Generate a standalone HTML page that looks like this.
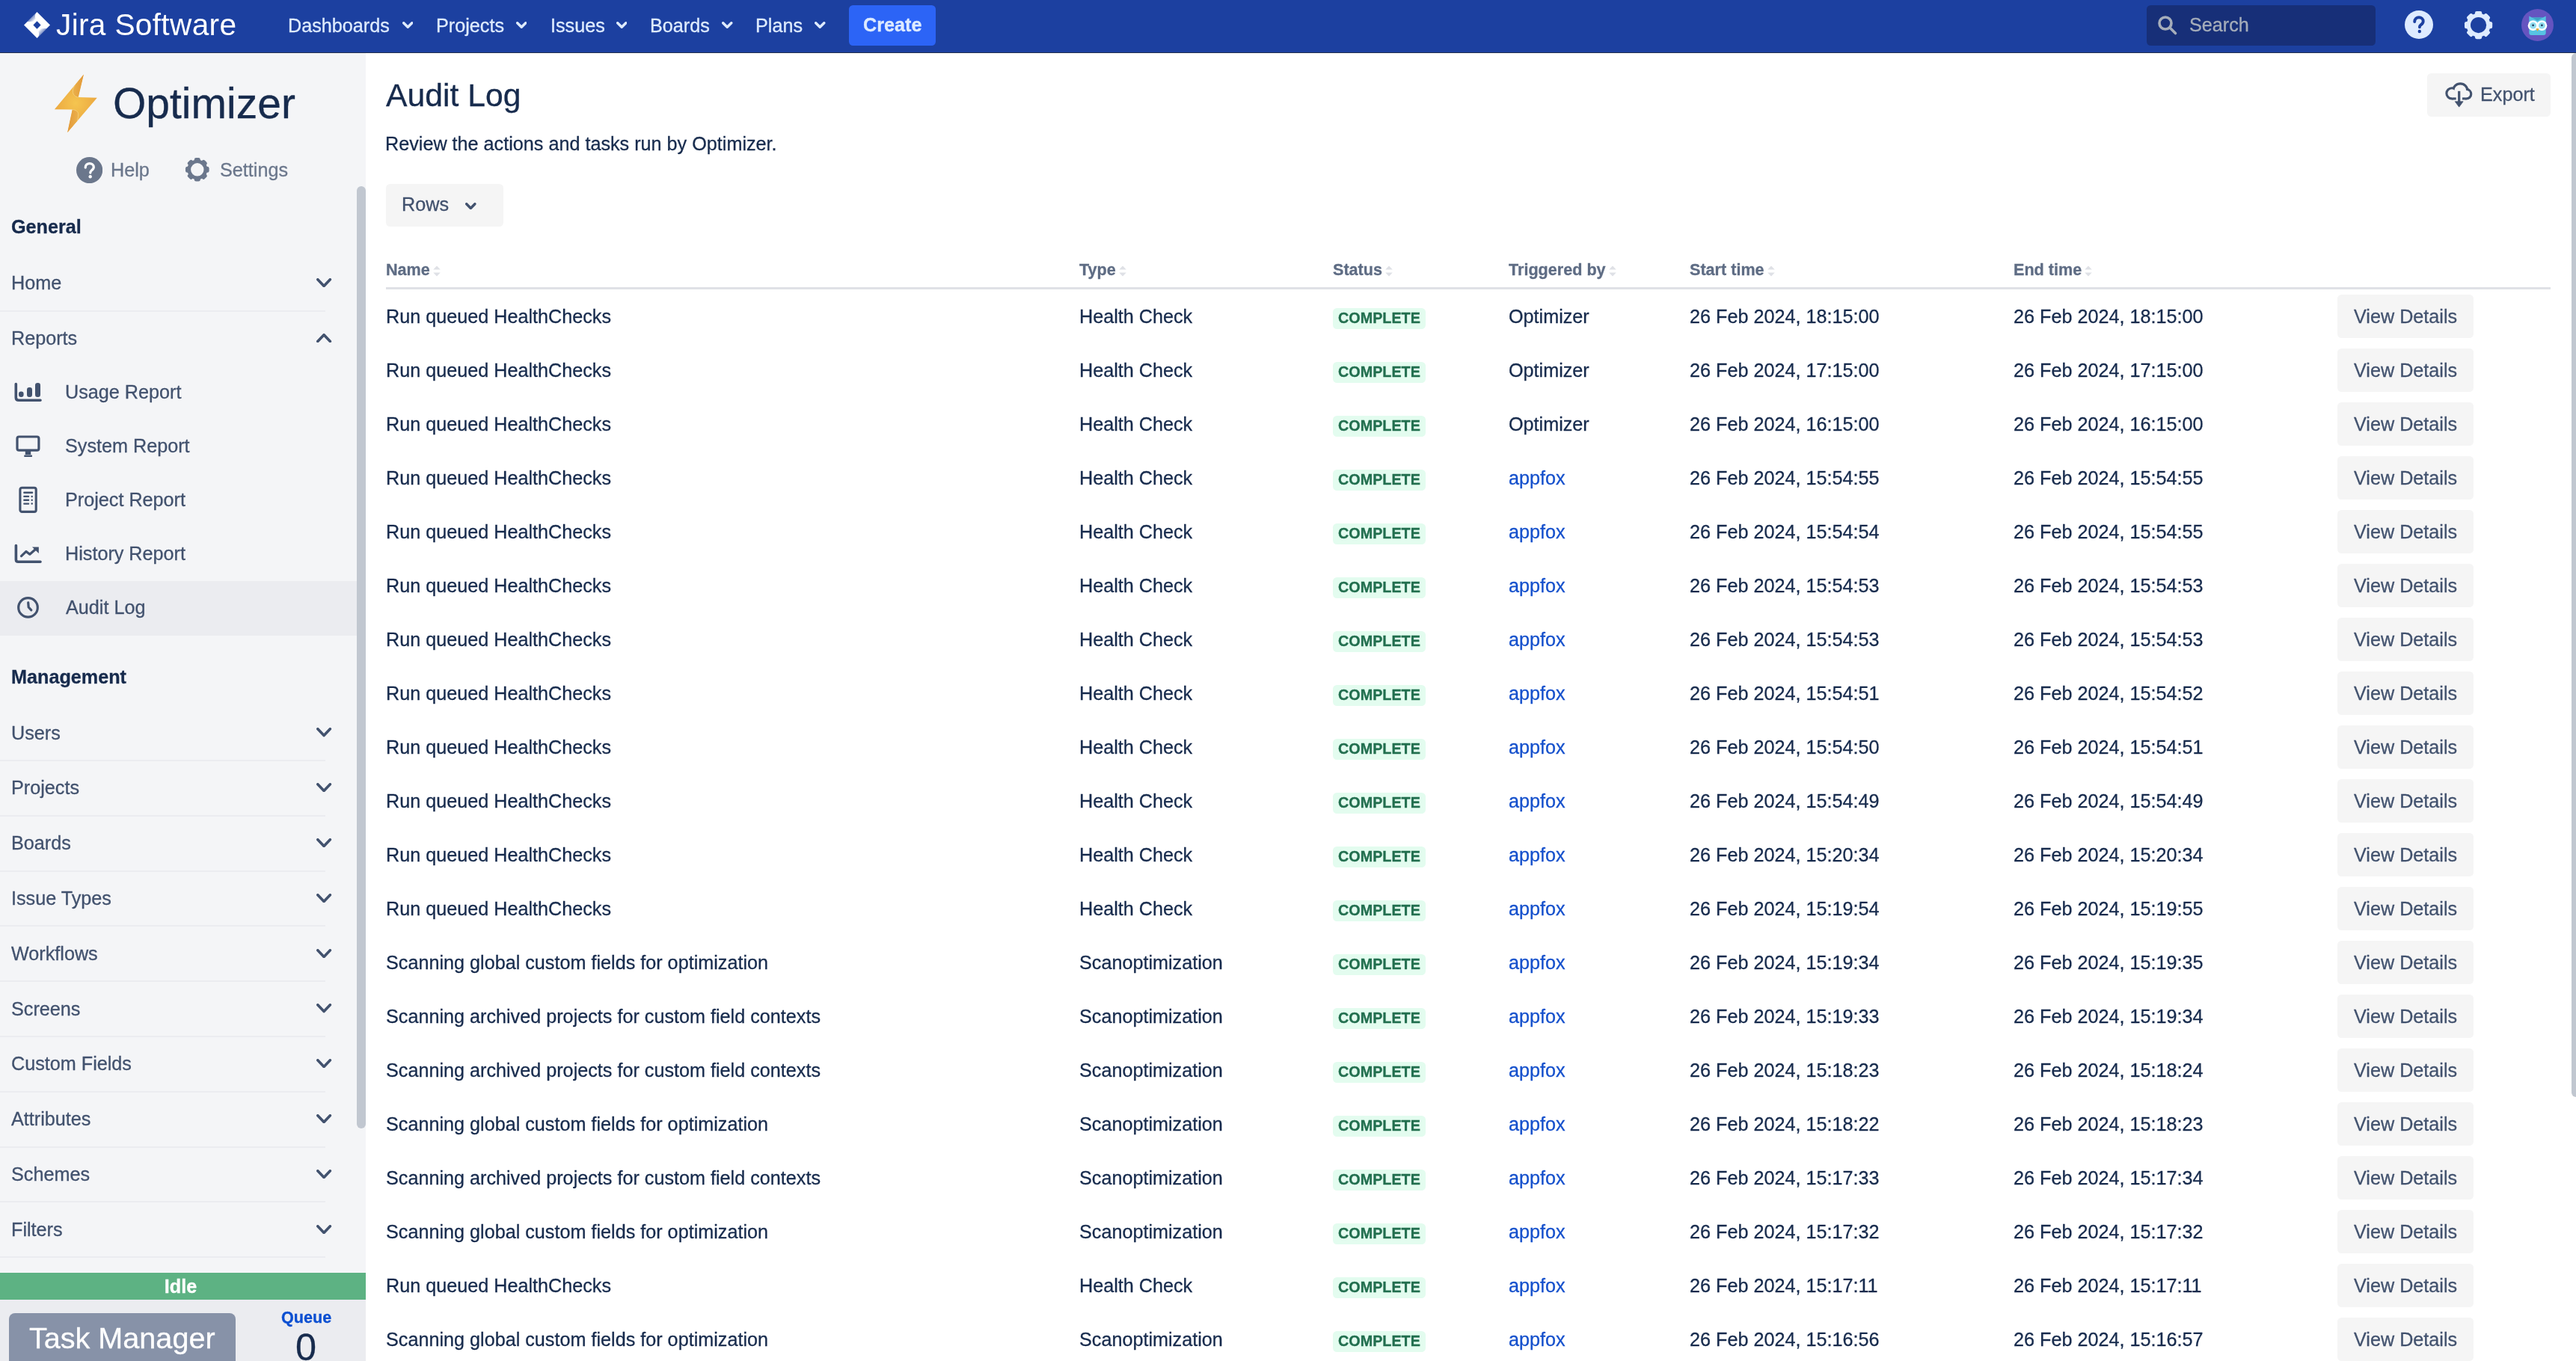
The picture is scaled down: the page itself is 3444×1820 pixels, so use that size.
<!DOCTYPE html>
<html><head><meta charset="utf-8"><title>Audit Log - Optimizer</title>
<style>
html,body{margin:0;padding:0;}
body{width:3444px;height:1820px;overflow:hidden;position:relative;background:#fff;font-family:"Liberation Sans",sans-serif;}
.a{position:absolute;}
.t{position:absolute;white-space:nowrap;line-height:1;will-change:transform;-webkit-text-stroke:0.3px currentColor;}
</style></head><body>
<div class="a" style="left:0.00px;top:0.00px;width:3444.00px;height:70.00px;background:#1c40a0;border-radius:0px;"></div>
<div class="a" style="left:0.00px;top:70.00px;width:3444.00px;height:1.00px;background:#24314d;border-radius:0px;"></div>
<svg class="a" style="left:31px;top:15px" width="37" height="37" viewBox="0 0 37 37">
<defs>
<linearGradient id="jg1" gradientUnits="userSpaceOnUse" x1="8.5" y1="8.5" x2="14" y2="14"><stop offset="0" stop-color="#1c40a0" stop-opacity="0.75"/><stop offset="1" stop-color="#1c40a0" stop-opacity="0"/></linearGradient>
<linearGradient id="jg2" gradientUnits="userSpaceOnUse" x1="28.5" y1="28.5" x2="23" y2="23"><stop offset="0" stop-color="#1c40a0" stop-opacity="0.75"/><stop offset="1" stop-color="#1c40a0" stop-opacity="0"/></linearGradient>
</defs>
<path d="M18.5 1 L36 18.5 L18.5 36 L1 18.5 Z" fill="#fff"/>
<path d="M5.5 14 L17.2 2.3 Q14.5 6.5 16.8 10.2 L13.3 13.7 Z" fill="url(#jg1)"/>
<path d="M31.5 23 L19.8 34.7 Q22.5 30.5 20.2 26.8 L23.7 23.3 Z" fill="url(#jg2)"/>
<path d="M18.5 13.3 L23.6 18.5 L18.5 23.7 L13.4 18.5 Z" fill="#1c40a0"/>
</svg>
<div class="t" style="left:75.00px;top:12.63px;font-size:40.6px;color:#ffffff;letter-spacing:0.35px;-webkit-text-stroke:0;">Jira Software</div>
<div class="t" style="left:385.20px;top:21.77px;font-size:25.2px;color:#deebff;">Dashboards</div>
<svg class="a" style="left:537.75px;top:28.90px" width="14.5" height="9" viewBox="0 0 14.5 9"><polyline points="1.70,1.70 7.25,7.30 12.80,1.70" fill="none" stroke="#deebff" stroke-width="3.4" stroke-linecap="round" stroke-linejoin="round"/></svg>
<div class="t" style="left:582.60px;top:21.77px;font-size:25.2px;color:#deebff;">Projects</div>
<svg class="a" style="left:689.75px;top:28.90px" width="14.5" height="9" viewBox="0 0 14.5 9"><polyline points="1.70,1.70 7.25,7.30 12.80,1.70" fill="none" stroke="#deebff" stroke-width="3.4" stroke-linecap="round" stroke-linejoin="round"/></svg>
<div class="t" style="left:735.50px;top:21.77px;font-size:25.2px;color:#deebff;">Issues</div>
<svg class="a" style="left:823.75px;top:28.90px" width="14.5" height="9" viewBox="0 0 14.5 9"><polyline points="1.70,1.70 7.25,7.30 12.80,1.70" fill="none" stroke="#deebff" stroke-width="3.4" stroke-linecap="round" stroke-linejoin="round"/></svg>
<div class="t" style="left:868.60px;top:21.77px;font-size:25.2px;color:#deebff;">Boards</div>
<svg class="a" style="left:965.45px;top:28.90px" width="14.5" height="9" viewBox="0 0 14.5 9"><polyline points="1.70,1.70 7.25,7.30 12.80,1.70" fill="none" stroke="#deebff" stroke-width="3.4" stroke-linecap="round" stroke-linejoin="round"/></svg>
<div class="t" style="left:1009.60px;top:21.77px;font-size:25.2px;color:#deebff;">Plans</div>
<svg class="a" style="left:1089.45px;top:28.90px" width="14.5" height="9" viewBox="0 0 14.5 9"><polyline points="1.70,1.70 7.25,7.30 12.80,1.70" fill="none" stroke="#deebff" stroke-width="3.4" stroke-linecap="round" stroke-linejoin="round"/></svg>
<div class="a" style="left:1135.20px;top:7.00px;width:115.70px;height:53.90px;background:#2c64f6;border-radius:5.4px;"></div>
<div class="t" style="left:1153.60px;top:21.07px;font-size:25.2px;color:#deebff;font-weight:700;">Create</div>
<div class="a" style="left:2870.00px;top:7.00px;width:305.75px;height:53.75px;background:#172f78;border-radius:5.4px;"></div>
<svg class="a" style="left:2884px;top:20px" width="28" height="28" viewBox="0 0 28 28"><circle cx="11" cy="11" r="8" fill="none" stroke="#a5adba" stroke-width="3.6"/><line x1="17" y1="17" x2="24.5" y2="24.5" stroke="#a5adba" stroke-width="3.6" stroke-linecap="round"/></svg>
<div class="t" style="left:2926.80px;top:21.17px;font-size:25.2px;color:#a5adba;">Search</div>
<svg class="a" style="left:3215px;top:14px" width="38" height="38" viewBox="0 0 38 38"><circle cx="19" cy="19" r="19" fill="#deebff"/>
<path d="M13.2 15 C13.2 11.2 16 9.2 19 9.2 C22.2 9.2 24.7 11.3 24.7 14.4 C24.7 17.2 22.8 18.3 21.4 19.3 C20.3 20.1 19.9 20.7 19.9 22.3" fill="none" stroke="#1c40a0" stroke-width="3.9" stroke-linecap="round"/>
<circle cx="19.8" cy="28" r="2.2" fill="#1c40a0"/></svg>
<svg class="a" style="left:3293.70px;top:13.70px" width="39.20" height="39.20" viewBox="0 0 39.20 39.20"><circle cx="19.60" cy="19.60" r="15.9" fill="#deebff"/><rect x="14.90" y="1.00" width="9.4" height="18.60" rx="2.4" fill="#deebff" transform="rotate(0 19.60 19.60)"/><rect x="14.90" y="1.00" width="9.4" height="18.60" rx="2.4" fill="#deebff" transform="rotate(45 19.60 19.60)"/><rect x="14.90" y="1.00" width="9.4" height="18.60" rx="2.4" fill="#deebff" transform="rotate(90 19.60 19.60)"/><rect x="14.90" y="1.00" width="9.4" height="18.60" rx="2.4" fill="#deebff" transform="rotate(135 19.60 19.60)"/><rect x="14.90" y="1.00" width="9.4" height="18.60" rx="2.4" fill="#deebff" transform="rotate(180 19.60 19.60)"/><rect x="14.90" y="1.00" width="9.4" height="18.60" rx="2.4" fill="#deebff" transform="rotate(225 19.60 19.60)"/><rect x="14.90" y="1.00" width="9.4" height="18.60" rx="2.4" fill="#deebff" transform="rotate(270 19.60 19.60)"/><rect x="14.90" y="1.00" width="9.4" height="18.60" rx="2.4" fill="#deebff" transform="rotate(315 19.60 19.60)"/><circle cx="19.60" cy="19.60" r="10.6" fill="#1c40a0"/></svg>
<svg class="a" style="left:3371px;top:12.4px" width="43" height="43" viewBox="0 0 43 43"><circle cx="21.5" cy="21.5" r="21.5" fill="#6554c0"/>
<path d="M10.3 9.5 L14.2 11.6 L28.8 11.6 L32.7 9.5 L32.7 32 Q32.7 35 29.7 35 L13.3 35 Q10.3 35 10.3 32 Z" fill="#57c3e3"/>
<path d="M14.2 11.6 L28.8 11.6 L21.5 15.8 Z" fill="#3ea3c4"/>
<circle cx="15.6" cy="22.2" r="6.9" fill="#fff"/><circle cx="27.4" cy="22.2" r="6.9" fill="#fff"/>
<circle cx="15.6" cy="22.2" r="4.4" fill="#8fdcef"/><circle cx="27.4" cy="22.2" r="4.4" fill="#8fdcef"/>
<circle cx="15.6" cy="21.8" r="1.4" fill="#253858"/><circle cx="27.4" cy="21.8" r="1.4" fill="#253858"/>
<path d="M19.4 26.3 L23.6 26.3 L21.5 30 Z" fill="#f6a623"/></svg>
<div class="a" style="left:0.00px;top:71.00px;width:489.00px;height:1749.00px;background:#f4f5f7;border-radius:0px;"></div>
<div class="a" style="left:477.00px;top:249.00px;width:12.00px;height:1260.00px;background:#c1c7d0;border-radius:6px;"></div>
<svg class="a" style="left:70px;top:97px" width="64" height="84" viewBox="0 0 64 84">
<defs><radialGradient id="lg" gradientUnits="userSpaceOnUse" cx="31" cy="41" r="30"><stop offset="0" stop-color="#f5c550"/><stop offset="1" stop-color="#eba740"/></radialGradient>
<linearGradient id="lg2" gradientUnits="userSpaceOnUse" x1="28" y1="20" x2="40" y2="20"><stop offset="0" stop-color="#eab04a"/><stop offset="1" stop-color="#e39b3b"/></linearGradient>
<linearGradient id="lg3" gradientUnits="userSpaceOnUse" x1="22" y1="62" x2="34" y2="62"><stop offset="0" stop-color="#e39b3b"/><stop offset="1" stop-color="#ebb04b"/></linearGradient></defs>
<path d="M41.96 2.6 L34.7 33.05 L59.8 33.7 L20.1 80.3 L26.7 49.6 L2.9 49.3 Z" fill="url(#lg)"/>
<clipPath id="lc"><path d="M41.96 2.6 L34.7 33.05 L59.8 33.7 L20.1 80.3 L26.7 49.6 L2.9 49.3 Z"/></clipPath>
<g clip-path="url(#lc)">
<path d="M41.96 2.6 L34.7 33.05 C30 32.5 27.2 29 27.3 25 C27.4 21 29 18.5 30.8 15.9 Z" fill="url(#lg2)"/>
<path d="M20.1 80.3 L26.7 49.6 C31 49.8 34.8 52 34.8 56 C34.8 59.5 33.8 62 33.5 64.4 Z" fill="url(#lg3)"/>
<path d="M34.7 33.05 C30 32.5 27.2 29 27.3 25 C27.4 21 29 18.5 30.8 15.9" fill="none" stroke="#f8d98a" stroke-width="0.7"/>
<path d="M26.7 49.6 C31 49.8 34.8 52 34.8 56 C34.8 59.5 33.8 62 33.5 64.4" fill="none" stroke="#f8d98a" stroke-width="0.7"/>
</g>
</svg>
<div class="t" style="left:150.50px;top:110.15px;font-size:57.0px;color:#172b4d;">Optimizer</div>
<svg class="a" style="left:101.8px;top:209.7px" width="35.2" height="35.2" viewBox="0 0 35.2 35.2"><circle cx="17.6" cy="17.6" r="17.6" fill="#6b778c"/>
<path d="M12.2 14 C12.2 10.6 14.8 8.6 17.8 8.6 C20.9 8.6 23.3 10.6 23.3 13.5 C23.3 16 21.6 17.1 20.3 18 C19.2 18.8 18.8 19.4 18.8 21" fill="none" stroke="#fff" stroke-width="3.3" stroke-linecap="round"/>
<circle cx="18.7" cy="26.3" r="2.2" fill="#fff"/></svg>
<div class="t" style="left:148.20px;top:214.57px;font-size:25.2px;color:#6b778c;">Help</div>
<svg class="a" style="left:247.20px;top:209.80px" width="33.60" height="33.60" viewBox="0 0 33.60 33.60"><circle cx="16.80" cy="16.80" r="13.4" fill="#6b778c"/><rect x="12.80" y="1.00" width="8.0" height="15.80" rx="2.4" fill="#6b778c" transform="rotate(0 16.80 16.80)"/><rect x="12.80" y="1.00" width="8.0" height="15.80" rx="2.4" fill="#6b778c" transform="rotate(45 16.80 16.80)"/><rect x="12.80" y="1.00" width="8.0" height="15.80" rx="2.4" fill="#6b778c" transform="rotate(90 16.80 16.80)"/><rect x="12.80" y="1.00" width="8.0" height="15.80" rx="2.4" fill="#6b778c" transform="rotate(135 16.80 16.80)"/><rect x="12.80" y="1.00" width="8.0" height="15.80" rx="2.4" fill="#6b778c" transform="rotate(180 16.80 16.80)"/><rect x="12.80" y="1.00" width="8.0" height="15.80" rx="2.4" fill="#6b778c" transform="rotate(225 16.80 16.80)"/><rect x="12.80" y="1.00" width="8.0" height="15.80" rx="2.4" fill="#6b778c" transform="rotate(270 16.80 16.80)"/><rect x="12.80" y="1.00" width="8.0" height="15.80" rx="2.4" fill="#6b778c" transform="rotate(315 16.80 16.80)"/><circle cx="16.80" cy="16.80" r="8.7" fill="#f4f5f7"/></svg>
<div class="t" style="left:293.90px;top:214.57px;font-size:25.2px;color:#6b778c;">Settings</div>
<div class="t" style="left:15.20px;top:290.67px;font-size:25.2px;color:#172b4d;font-weight:700;">General</div>
<div class="t" style="left:14.90px;top:365.97px;font-size:25.2px;color:#42526e;">Home</div>
<svg class="a" style="left:423.40px;top:371.85px" width="20.2" height="12.3" viewBox="0 0 20.2 12.3"><polyline points="1.80,1.80 10.10,10.50 18.40,1.80" fill="none" stroke="#42526e" stroke-width="3.6" stroke-linecap="round" stroke-linejoin="round"/></svg>
<div class="a" style="left:0.00px;top:415.00px;width:435.00px;height:2.00px;background:#ebecf0;border-radius:0px;"></div>
<div class="t" style="left:14.90px;top:439.67px;font-size:25.2px;color:#42526e;">Reports</div>
<svg class="a" style="left:423.40px;top:445.85px" width="20.2" height="12.3" viewBox="0 0 20.2 12.3"><polyline points="1.80,10.50 10.10,1.80 18.40,10.50" fill="none" stroke="#42526e" stroke-width="3.6" stroke-linecap="round" stroke-linejoin="round"/></svg>
<div class="a" style="left:0.00px;top:776.50px;width:477.00px;height:73.50px;background:#ebecf0;border-radius:0px;"></div>
<div class="t" style="left:87.40px;top:511.67px;font-size:25.2px;color:#42526e;">Usage Report</div>
<div class="t" style="left:87.40px;top:583.67px;font-size:25.2px;color:#42526e;">System Report</div>
<div class="t" style="left:86.60px;top:655.67px;font-size:25.2px;color:#42526e;">Project Report</div>
<div class="t" style="left:86.80px;top:727.67px;font-size:25.2px;color:#42526e;">History Report</div>
<div class="t" style="left:88.20px;top:799.67px;font-size:25.2px;color:#42526e;">Audit Log</div>
<svg class="a" style="left:17px;top:510px" width="42" height="30" viewBox="0 0 42 30">
<path d="M4.3 3.5 V21.5 Q4.3 25.2 8 25.2 H37" fill="none" stroke="#42526e" stroke-width="3.6" stroke-linecap="round" stroke-linejoin="round"/>
<rect x="8" y="13.5" width="6.6" height="7.5" rx="3.3" fill="#42526e"/>
<rect x="19" y="8" width="7" height="13" rx="3.3" fill="#42526e"/>
<rect x="30" y="2" width="7" height="19" rx="3.3" fill="#42526e"/>
</svg>
<svg class="a" style="left:19px;top:580px" width="38" height="35" viewBox="0 0 38 35">
<rect x="4" y="4" width="28.9" height="18.2" rx="2.5" fill="none" stroke="#42526e" stroke-width="3.2"/>
<rect x="14.8" y="23" width="7.4" height="5" fill="#42526e"/>
<rect x="13.3" y="28.5" width="10.6" height="2.5" fill="#42526e"/>
</svg>
<svg class="a" style="left:23px;top:648px" width="30" height="41" viewBox="0 0 30 41">
<rect x="3.9" y="4.2" width="21.3" height="32.2" rx="2.5" fill="none" stroke="#42526e" stroke-width="3.1"/>
<rect x="8.2" y="9.4" width="13" height="2.5" rx="1" fill="#42526e"/>
<rect x="8.2" y="14.8" width="8" height="2.3" rx="1" fill="#42526e"/><circle cx="19.7" cy="16" r="1.25" fill="#42526e"/>
<rect x="8.2" y="19.6" width="8" height="2.3" rx="1" fill="#42526e"/><circle cx="19.7" cy="20.8" r="1.25" fill="#42526e"/>
<rect x="8.2" y="24.5" width="8" height="2.3" rx="1" fill="#42526e"/><circle cx="19.7" cy="25.6" r="1.25" fill="#42526e"/>
</svg>
<svg class="a" style="left:17px;top:726px" width="42" height="30" viewBox="0 0 42 30">
<path d="M4.4 3.6 V22.5 Q4.4 25.2 7.4 25.2 H37" fill="none" stroke="#42526e" stroke-width="3.6" stroke-linecap="round" stroke-linejoin="round"/>
<polyline points="11.5,17.6 18,11.4 22.8,15.2 30.5,8.5" fill="none" stroke="#42526e" stroke-width="3.2" stroke-linecap="round" stroke-linejoin="round"/>
<path d="M26 5.4 L34.8 5.4 L34.8 14 Z" fill="#42526e"/>
</svg>
<svg class="a" style="left:21px;top:796px" width="34" height="34" viewBox="0 0 34 34">
<circle cx="16.5" cy="16.4" r="12.8" fill="none" stroke="#42526e" stroke-width="3.2"/>
<polyline points="16.7,9.8 17.2,16 20.8,19.8" fill="none" stroke="#42526e" stroke-width="3.2" stroke-linecap="round" stroke-linejoin="round"/>
</svg>
<div class="t" style="left:15.20px;top:892.67px;font-size:25.2px;color:#172b4d;font-weight:700;">Management</div>
<div class="t" style="left:14.90px;top:967.67px;font-size:25.2px;color:#42526e;">Users</div>
<svg class="a" style="left:423.40px;top:973.35px" width="20.2" height="12.3" viewBox="0 0 20.2 12.3"><polyline points="1.80,1.80 10.10,10.50 18.40,1.80" fill="none" stroke="#42526e" stroke-width="3.6" stroke-linecap="round" stroke-linejoin="round"/></svg>
<div class="a" style="left:0.00px;top:1016.00px;width:435.00px;height:2.00px;background:#ebecf0;border-radius:0px;"></div>
<div class="t" style="left:14.90px;top:1041.47px;font-size:25.2px;color:#42526e;">Projects</div>
<svg class="a" style="left:423.40px;top:1047.15px" width="20.2" height="12.3" viewBox="0 0 20.2 12.3"><polyline points="1.80,1.80 10.10,10.50 18.40,1.80" fill="none" stroke="#42526e" stroke-width="3.6" stroke-linecap="round" stroke-linejoin="round"/></svg>
<div class="a" style="left:0.00px;top:1089.80px;width:435.00px;height:2.00px;background:#ebecf0;border-radius:0px;"></div>
<div class="t" style="left:14.90px;top:1115.27px;font-size:25.2px;color:#42526e;">Boards</div>
<svg class="a" style="left:423.40px;top:1120.95px" width="20.2" height="12.3" viewBox="0 0 20.2 12.3"><polyline points="1.80,1.80 10.10,10.50 18.40,1.80" fill="none" stroke="#42526e" stroke-width="3.6" stroke-linecap="round" stroke-linejoin="round"/></svg>
<div class="a" style="left:0.00px;top:1163.60px;width:435.00px;height:2.00px;background:#ebecf0;border-radius:0px;"></div>
<div class="t" style="left:14.90px;top:1189.07px;font-size:25.2px;color:#42526e;">Issue Types</div>
<svg class="a" style="left:423.40px;top:1194.75px" width="20.2" height="12.3" viewBox="0 0 20.2 12.3"><polyline points="1.80,1.80 10.10,10.50 18.40,1.80" fill="none" stroke="#42526e" stroke-width="3.6" stroke-linecap="round" stroke-linejoin="round"/></svg>
<div class="a" style="left:0.00px;top:1237.40px;width:435.00px;height:2.00px;background:#ebecf0;border-radius:0px;"></div>
<div class="t" style="left:14.90px;top:1262.87px;font-size:25.2px;color:#42526e;">Workflows</div>
<svg class="a" style="left:423.40px;top:1268.55px" width="20.2" height="12.3" viewBox="0 0 20.2 12.3"><polyline points="1.80,1.80 10.10,10.50 18.40,1.80" fill="none" stroke="#42526e" stroke-width="3.6" stroke-linecap="round" stroke-linejoin="round"/></svg>
<div class="a" style="left:0.00px;top:1311.20px;width:435.00px;height:2.00px;background:#ebecf0;border-radius:0px;"></div>
<div class="t" style="left:14.90px;top:1336.67px;font-size:25.2px;color:#42526e;">Screens</div>
<svg class="a" style="left:423.40px;top:1342.35px" width="20.2" height="12.3" viewBox="0 0 20.2 12.3"><polyline points="1.80,1.80 10.10,10.50 18.40,1.80" fill="none" stroke="#42526e" stroke-width="3.6" stroke-linecap="round" stroke-linejoin="round"/></svg>
<div class="a" style="left:0.00px;top:1385.00px;width:435.00px;height:2.00px;background:#ebecf0;border-radius:0px;"></div>
<div class="t" style="left:14.90px;top:1410.47px;font-size:25.2px;color:#42526e;">Custom Fields</div>
<svg class="a" style="left:423.40px;top:1416.15px" width="20.2" height="12.3" viewBox="0 0 20.2 12.3"><polyline points="1.80,1.80 10.10,10.50 18.40,1.80" fill="none" stroke="#42526e" stroke-width="3.6" stroke-linecap="round" stroke-linejoin="round"/></svg>
<div class="a" style="left:0.00px;top:1458.80px;width:435.00px;height:2.00px;background:#ebecf0;border-radius:0px;"></div>
<div class="t" style="left:14.90px;top:1484.27px;font-size:25.2px;color:#42526e;">Attributes</div>
<svg class="a" style="left:423.40px;top:1489.95px" width="20.2" height="12.3" viewBox="0 0 20.2 12.3"><polyline points="1.80,1.80 10.10,10.50 18.40,1.80" fill="none" stroke="#42526e" stroke-width="3.6" stroke-linecap="round" stroke-linejoin="round"/></svg>
<div class="a" style="left:0.00px;top:1532.60px;width:435.00px;height:2.00px;background:#ebecf0;border-radius:0px;"></div>
<div class="t" style="left:14.90px;top:1558.07px;font-size:25.2px;color:#42526e;">Schemes</div>
<svg class="a" style="left:423.40px;top:1563.75px" width="20.2" height="12.3" viewBox="0 0 20.2 12.3"><polyline points="1.80,1.80 10.10,10.50 18.40,1.80" fill="none" stroke="#42526e" stroke-width="3.6" stroke-linecap="round" stroke-linejoin="round"/></svg>
<div class="a" style="left:0.00px;top:1606.40px;width:435.00px;height:2.00px;background:#ebecf0;border-radius:0px;"></div>
<div class="t" style="left:14.90px;top:1631.87px;font-size:25.2px;color:#42526e;">Filters</div>
<svg class="a" style="left:423.40px;top:1637.55px" width="20.2" height="12.3" viewBox="0 0 20.2 12.3"><polyline points="1.80,1.80 10.10,10.50 18.40,1.80" fill="none" stroke="#42526e" stroke-width="3.6" stroke-linecap="round" stroke-linejoin="round"/></svg>
<div class="a" style="left:0.00px;top:1680.20px;width:435.00px;height:2.00px;background:#ebecf0;border-radius:0px;"></div>
<div class="a" style="left:0.00px;top:1701.80px;width:489.00px;height:36.00px;background:#5db283;border-radius:0px;"></div>
<div class="t" style="left:-3.5px;width:489px;text-align:center;top:1708.17px;font-size:25.2px;font-weight:700;color:#fff">Idle</div>
<div class="a" style="left:0.00px;top:1737.80px;width:489.00px;height:82.20px;background:#ebecf0;border-radius:0px;"></div>
<div class="a" style="left:11.80px;top:1756.10px;width:303.30px;height:83.90px;background:#8792a8;border-radius:8px;"></div>
<div class="t" style="left:39.10px;top:1769.98px;font-size:39.6px;color:#ffffff;">Task Manager</div>
<div class="t" style="left:375.90px;top:1750.52px;font-size:21.6px;color:#0b4fd1;font-weight:700;">Queue</div>
<div class="t" style="left:394.70px;top:1777.04px;font-size:50.4px;color:#172b4d;">0</div>
<div class="t" style="left:515.70px;top:106.05px;font-size:42.7px;color:#172b4d;">Audit Log</div>
<div class="t" style="left:515.40px;top:179.57px;font-size:25.2px;color:#172b4d;">Review the actions and tasks run by Optimizer.</div>
<div class="a" style="left:3245.20px;top:98.00px;width:165.30px;height:57.70px;background:#f5f5f5;border-radius:5.4px;"></div>
<svg class="a" style="left:3267px;top:108px" width="40" height="38" viewBox="0 0 40 38">
<g fill="#42526e"><circle cx="11" cy="16.8" r="8.65"/><circle cx="22.3" cy="13.5" r="11.2"/><circle cx="30.5" cy="17.65" r="7.8"/><rect x="11" y="14" width="19.5" height="11.45"/></g>
<g fill="#f5f5f5"><circle cx="11" cy="16.8" r="5.55"/><circle cx="22.3" cy="13.5" r="8.1"/><circle cx="30.5" cy="17.65" r="4.7"/><rect x="11" y="14" width="19.5" height="8.35"/></g>
<rect x="16.7" y="20" width="8.3" height="7" fill="#f5f5f5"/>
<rect x="19.1" y="13.8" width="3.2" height="16" fill="#42526e"/>
<path d="M15.3 27.8 L26.1 27.8 L20.7 35.1 Z" fill="#42526e" stroke="#42526e" stroke-width="0.8" stroke-linejoin="round"/>
</svg>
<div class="t" style="left:3316.30px;top:114.07px;font-size:25.2px;color:#42526e;">Export</div>
<div class="a" style="left:516.20px;top:246.10px;width:156.50px;height:56.60px;background:#f5f5f5;border-radius:5.4px;"></div>
<div class="t" style="left:537.10px;top:261.47px;font-size:25.2px;color:#42526e;">Rows</div>
<svg class="a" style="left:622.40px;top:271.00px" width="14.6" height="9.2" viewBox="0 0 14.6 9.2"><polyline points="1.70,1.70 7.30,7.50 12.90,1.70" fill="none" stroke="#42526e" stroke-width="3.4" stroke-linecap="round" stroke-linejoin="round"/></svg>
<div class="t" style="left:515.70px;top:349.62px;font-size:21.6px;color:#5e6c84;font-weight:700;">Name</div>
<svg class="a" style="left:578.73px;top:354.5px" width="10" height="15" viewBox="0 0 10 15"><path d="M5 0.5 L9.8 5.5 L0.2 5.5 Z M0.2 9.4 L9.8 9.4 L5 14.4 Z" fill="#dfe1e6"/></svg>
<div class="t" style="left:1443.30px;top:349.62px;font-size:21.6px;color:#5e6c84;font-weight:700;">Type</div>
<svg class="a" style="left:1496.31px;top:354.5px" width="10" height="15" viewBox="0 0 10 15"><path d="M5 0.5 L9.8 5.5 L0.2 5.5 Z M0.2 9.4 L9.8 9.4 L5 14.4 Z" fill="#dfe1e6"/></svg>
<div class="t" style="left:1782.00px;top:349.62px;font-size:21.6px;color:#5e6c84;font-weight:700;">Status</div>
<svg class="a" style="left:1852.21px;top:354.5px" width="10" height="15" viewBox="0 0 10 15"><path d="M5 0.5 L9.8 5.5 L0.2 5.5 Z M0.2 9.4 L9.8 9.4 L5 14.4 Z" fill="#dfe1e6"/></svg>
<div class="t" style="left:2017.00px;top:349.62px;font-size:21.6px;color:#5e6c84;font-weight:700;">Triggered by</div>
<svg class="a" style="left:2150.83px;top:354.5px" width="10" height="15" viewBox="0 0 10 15"><path d="M5 0.5 L9.8 5.5 L0.2 5.5 Z M0.2 9.4 L9.8 9.4 L5 14.4 Z" fill="#dfe1e6"/></svg>
<div class="t" style="left:2259.00px;top:349.62px;font-size:21.6px;color:#5e6c84;font-weight:700;">Start time</div>
<svg class="a" style="left:2362.83px;top:354.5px" width="10" height="15" viewBox="0 0 10 15"><path d="M5 0.5 L9.8 5.5 L0.2 5.5 Z M0.2 9.4 L9.8 9.4 L5 14.4 Z" fill="#dfe1e6"/></svg>
<div class="t" style="left:2692.00px;top:349.62px;font-size:21.6px;color:#5e6c84;font-weight:700;">End time</div>
<svg class="a" style="left:2787.41px;top:354.5px" width="10" height="15" viewBox="0 0 10 15"><path d="M5 0.5 L9.8 5.5 L0.2 5.5 Z M0.2 9.4 L9.8 9.4 L5 14.4 Z" fill="#dfe1e6"/></svg>
<div class="a" style="left:516.00px;top:384.00px;width:2894.00px;height:3.00px;background:#dfe1e6;border-radius:0px;"></div>
<div class="t" style="left:516.40px;top:410.67px;font-size:25.2px;color:#172b4d;">Run queued HealthChecks</div>
<div class="t" style="left:1442.90px;top:410.67px;font-size:25.2px;color:#172b4d;">Health Check</div>
<div class="a" style="left:1782.30px;top:412.20px;width:123.70px;height:28.30px;background:#e3fcef;border-radius:5.4px;"></div>
<div class="t" style="left:1789.00px;top:415.94px;font-size:19.8px;color:#216e4e;font-weight:700;">COMPLETE</div>
<div class="t" style="left:2017.20px;top:410.67px;font-size:25.2px;color:#172b4d;">Optimizer</div>
<div class="t" style="left:2259.40px;top:410.67px;font-size:25.2px;color:#172b4d;">26 Feb 2024, 18:15:00</div>
<div class="t" style="left:2691.80px;top:410.67px;font-size:25.2px;color:#172b4d;">26 Feb 2024, 18:15:00</div>
<div class="a" style="left:3125.40px;top:394.40px;width:181.60px;height:57.60px;background:#f5f5f5;border-radius:5.4px;"></div>
<div class="t" style="left:3146.70px;top:411.17px;font-size:25.2px;color:#42526e;">View Details</div>
<div class="t" style="left:516.40px;top:482.67px;font-size:25.2px;color:#172b4d;">Run queued HealthChecks</div>
<div class="t" style="left:1442.90px;top:482.67px;font-size:25.2px;color:#172b4d;">Health Check</div>
<div class="a" style="left:1782.30px;top:484.20px;width:123.70px;height:28.30px;background:#e3fcef;border-radius:5.4px;"></div>
<div class="t" style="left:1789.00px;top:487.94px;font-size:19.8px;color:#216e4e;font-weight:700;">COMPLETE</div>
<div class="t" style="left:2017.20px;top:482.67px;font-size:25.2px;color:#172b4d;">Optimizer</div>
<div class="t" style="left:2259.40px;top:482.67px;font-size:25.2px;color:#172b4d;">26 Feb 2024, 17:15:00</div>
<div class="t" style="left:2691.80px;top:482.67px;font-size:25.2px;color:#172b4d;">26 Feb 2024, 17:15:00</div>
<div class="a" style="left:3125.40px;top:466.40px;width:181.60px;height:57.60px;background:#f5f5f5;border-radius:5.4px;"></div>
<div class="t" style="left:3146.70px;top:483.17px;font-size:25.2px;color:#42526e;">View Details</div>
<div class="t" style="left:516.40px;top:554.67px;font-size:25.2px;color:#172b4d;">Run queued HealthChecks</div>
<div class="t" style="left:1442.90px;top:554.67px;font-size:25.2px;color:#172b4d;">Health Check</div>
<div class="a" style="left:1782.30px;top:556.20px;width:123.70px;height:28.30px;background:#e3fcef;border-radius:5.4px;"></div>
<div class="t" style="left:1789.00px;top:559.94px;font-size:19.8px;color:#216e4e;font-weight:700;">COMPLETE</div>
<div class="t" style="left:2017.20px;top:554.67px;font-size:25.2px;color:#172b4d;">Optimizer</div>
<div class="t" style="left:2259.40px;top:554.67px;font-size:25.2px;color:#172b4d;">26 Feb 2024, 16:15:00</div>
<div class="t" style="left:2691.80px;top:554.67px;font-size:25.2px;color:#172b4d;">26 Feb 2024, 16:15:00</div>
<div class="a" style="left:3125.40px;top:538.40px;width:181.60px;height:57.60px;background:#f5f5f5;border-radius:5.4px;"></div>
<div class="t" style="left:3146.70px;top:555.17px;font-size:25.2px;color:#42526e;">View Details</div>
<div class="t" style="left:516.40px;top:626.67px;font-size:25.2px;color:#172b4d;">Run queued HealthChecks</div>
<div class="t" style="left:1442.90px;top:626.67px;font-size:25.2px;color:#172b4d;">Health Check</div>
<div class="a" style="left:1782.30px;top:628.20px;width:123.70px;height:28.30px;background:#e3fcef;border-radius:5.4px;"></div>
<div class="t" style="left:1789.00px;top:631.94px;font-size:19.8px;color:#216e4e;font-weight:700;">COMPLETE</div>
<div class="t" style="left:2017.00px;top:626.67px;font-size:25.2px;color:#1550cc;">appfox</div>
<div class="t" style="left:2259.40px;top:626.67px;font-size:25.2px;color:#172b4d;">26 Feb 2024, 15:54:55</div>
<div class="t" style="left:2691.80px;top:626.67px;font-size:25.2px;color:#172b4d;">26 Feb 2024, 15:54:55</div>
<div class="a" style="left:3125.40px;top:610.40px;width:181.60px;height:57.60px;background:#f5f5f5;border-radius:5.4px;"></div>
<div class="t" style="left:3146.70px;top:627.17px;font-size:25.2px;color:#42526e;">View Details</div>
<div class="t" style="left:516.40px;top:698.67px;font-size:25.2px;color:#172b4d;">Run queued HealthChecks</div>
<div class="t" style="left:1442.90px;top:698.67px;font-size:25.2px;color:#172b4d;">Health Check</div>
<div class="a" style="left:1782.30px;top:700.20px;width:123.70px;height:28.30px;background:#e3fcef;border-radius:5.4px;"></div>
<div class="t" style="left:1789.00px;top:703.94px;font-size:19.8px;color:#216e4e;font-weight:700;">COMPLETE</div>
<div class="t" style="left:2017.00px;top:698.67px;font-size:25.2px;color:#1550cc;">appfox</div>
<div class="t" style="left:2259.40px;top:698.67px;font-size:25.2px;color:#172b4d;">26 Feb 2024, 15:54:54</div>
<div class="t" style="left:2691.80px;top:698.67px;font-size:25.2px;color:#172b4d;">26 Feb 2024, 15:54:55</div>
<div class="a" style="left:3125.40px;top:682.40px;width:181.60px;height:57.60px;background:#f5f5f5;border-radius:5.4px;"></div>
<div class="t" style="left:3146.70px;top:699.17px;font-size:25.2px;color:#42526e;">View Details</div>
<div class="t" style="left:516.40px;top:770.67px;font-size:25.2px;color:#172b4d;">Run queued HealthChecks</div>
<div class="t" style="left:1442.90px;top:770.67px;font-size:25.2px;color:#172b4d;">Health Check</div>
<div class="a" style="left:1782.30px;top:772.20px;width:123.70px;height:28.30px;background:#e3fcef;border-radius:5.4px;"></div>
<div class="t" style="left:1789.00px;top:775.94px;font-size:19.8px;color:#216e4e;font-weight:700;">COMPLETE</div>
<div class="t" style="left:2017.00px;top:770.67px;font-size:25.2px;color:#1550cc;">appfox</div>
<div class="t" style="left:2259.40px;top:770.67px;font-size:25.2px;color:#172b4d;">26 Feb 2024, 15:54:53</div>
<div class="t" style="left:2691.80px;top:770.67px;font-size:25.2px;color:#172b4d;">26 Feb 2024, 15:54:53</div>
<div class="a" style="left:3125.40px;top:754.40px;width:181.60px;height:57.60px;background:#f5f5f5;border-radius:5.4px;"></div>
<div class="t" style="left:3146.70px;top:771.17px;font-size:25.2px;color:#42526e;">View Details</div>
<div class="t" style="left:516.40px;top:842.67px;font-size:25.2px;color:#172b4d;">Run queued HealthChecks</div>
<div class="t" style="left:1442.90px;top:842.67px;font-size:25.2px;color:#172b4d;">Health Check</div>
<div class="a" style="left:1782.30px;top:844.20px;width:123.70px;height:28.30px;background:#e3fcef;border-radius:5.4px;"></div>
<div class="t" style="left:1789.00px;top:847.94px;font-size:19.8px;color:#216e4e;font-weight:700;">COMPLETE</div>
<div class="t" style="left:2017.00px;top:842.67px;font-size:25.2px;color:#1550cc;">appfox</div>
<div class="t" style="left:2259.40px;top:842.67px;font-size:25.2px;color:#172b4d;">26 Feb 2024, 15:54:53</div>
<div class="t" style="left:2691.80px;top:842.67px;font-size:25.2px;color:#172b4d;">26 Feb 2024, 15:54:53</div>
<div class="a" style="left:3125.40px;top:826.40px;width:181.60px;height:57.60px;background:#f5f5f5;border-radius:5.4px;"></div>
<div class="t" style="left:3146.70px;top:843.17px;font-size:25.2px;color:#42526e;">View Details</div>
<div class="t" style="left:516.40px;top:914.67px;font-size:25.2px;color:#172b4d;">Run queued HealthChecks</div>
<div class="t" style="left:1442.90px;top:914.67px;font-size:25.2px;color:#172b4d;">Health Check</div>
<div class="a" style="left:1782.30px;top:916.20px;width:123.70px;height:28.30px;background:#e3fcef;border-radius:5.4px;"></div>
<div class="t" style="left:1789.00px;top:919.94px;font-size:19.8px;color:#216e4e;font-weight:700;">COMPLETE</div>
<div class="t" style="left:2017.00px;top:914.67px;font-size:25.2px;color:#1550cc;">appfox</div>
<div class="t" style="left:2259.40px;top:914.67px;font-size:25.2px;color:#172b4d;">26 Feb 2024, 15:54:51</div>
<div class="t" style="left:2691.80px;top:914.67px;font-size:25.2px;color:#172b4d;">26 Feb 2024, 15:54:52</div>
<div class="a" style="left:3125.40px;top:898.40px;width:181.60px;height:57.60px;background:#f5f5f5;border-radius:5.4px;"></div>
<div class="t" style="left:3146.70px;top:915.17px;font-size:25.2px;color:#42526e;">View Details</div>
<div class="t" style="left:516.40px;top:986.67px;font-size:25.2px;color:#172b4d;">Run queued HealthChecks</div>
<div class="t" style="left:1442.90px;top:986.67px;font-size:25.2px;color:#172b4d;">Health Check</div>
<div class="a" style="left:1782.30px;top:988.20px;width:123.70px;height:28.30px;background:#e3fcef;border-radius:5.4px;"></div>
<div class="t" style="left:1789.00px;top:991.94px;font-size:19.8px;color:#216e4e;font-weight:700;">COMPLETE</div>
<div class="t" style="left:2017.00px;top:986.67px;font-size:25.2px;color:#1550cc;">appfox</div>
<div class="t" style="left:2259.40px;top:986.67px;font-size:25.2px;color:#172b4d;">26 Feb 2024, 15:54:50</div>
<div class="t" style="left:2691.80px;top:986.67px;font-size:25.2px;color:#172b4d;">26 Feb 2024, 15:54:51</div>
<div class="a" style="left:3125.40px;top:970.40px;width:181.60px;height:57.60px;background:#f5f5f5;border-radius:5.4px;"></div>
<div class="t" style="left:3146.70px;top:987.17px;font-size:25.2px;color:#42526e;">View Details</div>
<div class="t" style="left:516.40px;top:1058.67px;font-size:25.2px;color:#172b4d;">Run queued HealthChecks</div>
<div class="t" style="left:1442.90px;top:1058.67px;font-size:25.2px;color:#172b4d;">Health Check</div>
<div class="a" style="left:1782.30px;top:1060.20px;width:123.70px;height:28.30px;background:#e3fcef;border-radius:5.4px;"></div>
<div class="t" style="left:1789.00px;top:1063.94px;font-size:19.8px;color:#216e4e;font-weight:700;">COMPLETE</div>
<div class="t" style="left:2017.00px;top:1058.67px;font-size:25.2px;color:#1550cc;">appfox</div>
<div class="t" style="left:2259.40px;top:1058.67px;font-size:25.2px;color:#172b4d;">26 Feb 2024, 15:54:49</div>
<div class="t" style="left:2691.80px;top:1058.67px;font-size:25.2px;color:#172b4d;">26 Feb 2024, 15:54:49</div>
<div class="a" style="left:3125.40px;top:1042.40px;width:181.60px;height:57.60px;background:#f5f5f5;border-radius:5.4px;"></div>
<div class="t" style="left:3146.70px;top:1059.17px;font-size:25.2px;color:#42526e;">View Details</div>
<div class="t" style="left:516.40px;top:1130.67px;font-size:25.2px;color:#172b4d;">Run queued HealthChecks</div>
<div class="t" style="left:1442.90px;top:1130.67px;font-size:25.2px;color:#172b4d;">Health Check</div>
<div class="a" style="left:1782.30px;top:1132.20px;width:123.70px;height:28.30px;background:#e3fcef;border-radius:5.4px;"></div>
<div class="t" style="left:1789.00px;top:1135.94px;font-size:19.8px;color:#216e4e;font-weight:700;">COMPLETE</div>
<div class="t" style="left:2017.00px;top:1130.67px;font-size:25.2px;color:#1550cc;">appfox</div>
<div class="t" style="left:2259.40px;top:1130.67px;font-size:25.2px;color:#172b4d;">26 Feb 2024, 15:20:34</div>
<div class="t" style="left:2691.80px;top:1130.67px;font-size:25.2px;color:#172b4d;">26 Feb 2024, 15:20:34</div>
<div class="a" style="left:3125.40px;top:1114.40px;width:181.60px;height:57.60px;background:#f5f5f5;border-radius:5.4px;"></div>
<div class="t" style="left:3146.70px;top:1131.17px;font-size:25.2px;color:#42526e;">View Details</div>
<div class="t" style="left:516.40px;top:1202.67px;font-size:25.2px;color:#172b4d;">Run queued HealthChecks</div>
<div class="t" style="left:1442.90px;top:1202.67px;font-size:25.2px;color:#172b4d;">Health Check</div>
<div class="a" style="left:1782.30px;top:1204.20px;width:123.70px;height:28.30px;background:#e3fcef;border-radius:5.4px;"></div>
<div class="t" style="left:1789.00px;top:1207.94px;font-size:19.8px;color:#216e4e;font-weight:700;">COMPLETE</div>
<div class="t" style="left:2017.00px;top:1202.67px;font-size:25.2px;color:#1550cc;">appfox</div>
<div class="t" style="left:2259.40px;top:1202.67px;font-size:25.2px;color:#172b4d;">26 Feb 2024, 15:19:54</div>
<div class="t" style="left:2691.80px;top:1202.67px;font-size:25.2px;color:#172b4d;">26 Feb 2024, 15:19:55</div>
<div class="a" style="left:3125.40px;top:1186.40px;width:181.60px;height:57.60px;background:#f5f5f5;border-radius:5.4px;"></div>
<div class="t" style="left:3146.70px;top:1203.17px;font-size:25.2px;color:#42526e;">View Details</div>
<div class="t" style="left:516.40px;top:1274.67px;font-size:25.2px;color:#172b4d;">Scanning global custom fields for optimization</div>
<div class="t" style="left:1442.90px;top:1274.67px;font-size:25.2px;color:#172b4d;">Scanoptimization</div>
<div class="a" style="left:1782.30px;top:1276.20px;width:123.70px;height:28.30px;background:#e3fcef;border-radius:5.4px;"></div>
<div class="t" style="left:1789.00px;top:1279.94px;font-size:19.8px;color:#216e4e;font-weight:700;">COMPLETE</div>
<div class="t" style="left:2017.00px;top:1274.67px;font-size:25.2px;color:#1550cc;">appfox</div>
<div class="t" style="left:2259.40px;top:1274.67px;font-size:25.2px;color:#172b4d;">26 Feb 2024, 15:19:34</div>
<div class="t" style="left:2691.80px;top:1274.67px;font-size:25.2px;color:#172b4d;">26 Feb 2024, 15:19:35</div>
<div class="a" style="left:3125.40px;top:1258.40px;width:181.60px;height:57.60px;background:#f5f5f5;border-radius:5.4px;"></div>
<div class="t" style="left:3146.70px;top:1275.17px;font-size:25.2px;color:#42526e;">View Details</div>
<div class="t" style="left:516.40px;top:1346.67px;font-size:25.2px;color:#172b4d;">Scanning archived projects for custom field contexts</div>
<div class="t" style="left:1442.90px;top:1346.67px;font-size:25.2px;color:#172b4d;">Scanoptimization</div>
<div class="a" style="left:1782.30px;top:1348.20px;width:123.70px;height:28.30px;background:#e3fcef;border-radius:5.4px;"></div>
<div class="t" style="left:1789.00px;top:1351.94px;font-size:19.8px;color:#216e4e;font-weight:700;">COMPLETE</div>
<div class="t" style="left:2017.00px;top:1346.67px;font-size:25.2px;color:#1550cc;">appfox</div>
<div class="t" style="left:2259.40px;top:1346.67px;font-size:25.2px;color:#172b4d;">26 Feb 2024, 15:19:33</div>
<div class="t" style="left:2691.80px;top:1346.67px;font-size:25.2px;color:#172b4d;">26 Feb 2024, 15:19:34</div>
<div class="a" style="left:3125.40px;top:1330.40px;width:181.60px;height:57.60px;background:#f5f5f5;border-radius:5.4px;"></div>
<div class="t" style="left:3146.70px;top:1347.17px;font-size:25.2px;color:#42526e;">View Details</div>
<div class="t" style="left:516.40px;top:1418.67px;font-size:25.2px;color:#172b4d;">Scanning archived projects for custom field contexts</div>
<div class="t" style="left:1442.90px;top:1418.67px;font-size:25.2px;color:#172b4d;">Scanoptimization</div>
<div class="a" style="left:1782.30px;top:1420.20px;width:123.70px;height:28.30px;background:#e3fcef;border-radius:5.4px;"></div>
<div class="t" style="left:1789.00px;top:1423.94px;font-size:19.8px;color:#216e4e;font-weight:700;">COMPLETE</div>
<div class="t" style="left:2017.00px;top:1418.67px;font-size:25.2px;color:#1550cc;">appfox</div>
<div class="t" style="left:2259.40px;top:1418.67px;font-size:25.2px;color:#172b4d;">26 Feb 2024, 15:18:23</div>
<div class="t" style="left:2691.80px;top:1418.67px;font-size:25.2px;color:#172b4d;">26 Feb 2024, 15:18:24</div>
<div class="a" style="left:3125.40px;top:1402.40px;width:181.60px;height:57.60px;background:#f5f5f5;border-radius:5.4px;"></div>
<div class="t" style="left:3146.70px;top:1419.17px;font-size:25.2px;color:#42526e;">View Details</div>
<div class="t" style="left:516.40px;top:1490.67px;font-size:25.2px;color:#172b4d;">Scanning global custom fields for optimization</div>
<div class="t" style="left:1442.90px;top:1490.67px;font-size:25.2px;color:#172b4d;">Scanoptimization</div>
<div class="a" style="left:1782.30px;top:1492.20px;width:123.70px;height:28.30px;background:#e3fcef;border-radius:5.4px;"></div>
<div class="t" style="left:1789.00px;top:1495.94px;font-size:19.8px;color:#216e4e;font-weight:700;">COMPLETE</div>
<div class="t" style="left:2017.00px;top:1490.67px;font-size:25.2px;color:#1550cc;">appfox</div>
<div class="t" style="left:2259.40px;top:1490.67px;font-size:25.2px;color:#172b4d;">26 Feb 2024, 15:18:22</div>
<div class="t" style="left:2691.80px;top:1490.67px;font-size:25.2px;color:#172b4d;">26 Feb 2024, 15:18:23</div>
<div class="a" style="left:3125.40px;top:1474.40px;width:181.60px;height:57.60px;background:#f5f5f5;border-radius:5.4px;"></div>
<div class="t" style="left:3146.70px;top:1491.17px;font-size:25.2px;color:#42526e;">View Details</div>
<div class="t" style="left:516.40px;top:1562.67px;font-size:25.2px;color:#172b4d;">Scanning archived projects for custom field contexts</div>
<div class="t" style="left:1442.90px;top:1562.67px;font-size:25.2px;color:#172b4d;">Scanoptimization</div>
<div class="a" style="left:1782.30px;top:1564.20px;width:123.70px;height:28.30px;background:#e3fcef;border-radius:5.4px;"></div>
<div class="t" style="left:1789.00px;top:1567.94px;font-size:19.8px;color:#216e4e;font-weight:700;">COMPLETE</div>
<div class="t" style="left:2017.00px;top:1562.67px;font-size:25.2px;color:#1550cc;">appfox</div>
<div class="t" style="left:2259.40px;top:1562.67px;font-size:25.2px;color:#172b4d;">26 Feb 2024, 15:17:33</div>
<div class="t" style="left:2691.80px;top:1562.67px;font-size:25.2px;color:#172b4d;">26 Feb 2024, 15:17:34</div>
<div class="a" style="left:3125.40px;top:1546.40px;width:181.60px;height:57.60px;background:#f5f5f5;border-radius:5.4px;"></div>
<div class="t" style="left:3146.70px;top:1563.17px;font-size:25.2px;color:#42526e;">View Details</div>
<div class="t" style="left:516.40px;top:1634.67px;font-size:25.2px;color:#172b4d;">Scanning global custom fields for optimization</div>
<div class="t" style="left:1442.90px;top:1634.67px;font-size:25.2px;color:#172b4d;">Scanoptimization</div>
<div class="a" style="left:1782.30px;top:1636.20px;width:123.70px;height:28.30px;background:#e3fcef;border-radius:5.4px;"></div>
<div class="t" style="left:1789.00px;top:1639.94px;font-size:19.8px;color:#216e4e;font-weight:700;">COMPLETE</div>
<div class="t" style="left:2017.00px;top:1634.67px;font-size:25.2px;color:#1550cc;">appfox</div>
<div class="t" style="left:2259.40px;top:1634.67px;font-size:25.2px;color:#172b4d;">26 Feb 2024, 15:17:32</div>
<div class="t" style="left:2691.80px;top:1634.67px;font-size:25.2px;color:#172b4d;">26 Feb 2024, 15:17:32</div>
<div class="a" style="left:3125.40px;top:1618.40px;width:181.60px;height:57.60px;background:#f5f5f5;border-radius:5.4px;"></div>
<div class="t" style="left:3146.70px;top:1635.17px;font-size:25.2px;color:#42526e;">View Details</div>
<div class="t" style="left:516.40px;top:1706.67px;font-size:25.2px;color:#172b4d;">Run queued HealthChecks</div>
<div class="t" style="left:1442.90px;top:1706.67px;font-size:25.2px;color:#172b4d;">Health Check</div>
<div class="a" style="left:1782.30px;top:1708.20px;width:123.70px;height:28.30px;background:#e3fcef;border-radius:5.4px;"></div>
<div class="t" style="left:1789.00px;top:1711.94px;font-size:19.8px;color:#216e4e;font-weight:700;">COMPLETE</div>
<div class="t" style="left:2017.00px;top:1706.67px;font-size:25.2px;color:#1550cc;">appfox</div>
<div class="t" style="left:2259.40px;top:1706.67px;font-size:25.2px;color:#172b4d;">26 Feb 2024, 15:17:11</div>
<div class="t" style="left:2691.80px;top:1706.67px;font-size:25.2px;color:#172b4d;">26 Feb 2024, 15:17:11</div>
<div class="a" style="left:3125.40px;top:1690.40px;width:181.60px;height:57.60px;background:#f5f5f5;border-radius:5.4px;"></div>
<div class="t" style="left:3146.70px;top:1707.17px;font-size:25.2px;color:#42526e;">View Details</div>
<div class="t" style="left:516.40px;top:1778.67px;font-size:25.2px;color:#172b4d;">Scanning global custom fields for optimization</div>
<div class="t" style="left:1442.90px;top:1778.67px;font-size:25.2px;color:#172b4d;">Scanoptimization</div>
<div class="a" style="left:1782.30px;top:1780.20px;width:123.70px;height:28.30px;background:#e3fcef;border-radius:5.4px;"></div>
<div class="t" style="left:1789.00px;top:1783.94px;font-size:19.8px;color:#216e4e;font-weight:700;">COMPLETE</div>
<div class="t" style="left:2017.00px;top:1778.67px;font-size:25.2px;color:#1550cc;">appfox</div>
<div class="t" style="left:2259.40px;top:1778.67px;font-size:25.2px;color:#172b4d;">26 Feb 2024, 15:16:56</div>
<div class="t" style="left:2691.80px;top:1778.67px;font-size:25.2px;color:#172b4d;">26 Feb 2024, 15:16:57</div>
<div class="a" style="left:3125.40px;top:1762.40px;width:181.60px;height:57.60px;background:#f5f5f5;border-radius:5.4px;"></div>
<div class="t" style="left:3146.70px;top:1779.17px;font-size:25.2px;color:#42526e;">View Details</div>
<div class="a" style="left:3438.00px;top:71.00px;width:12.00px;height:1396.00px;background:#c1c7d0;border-radius:6px;"></div>
</body></html>
